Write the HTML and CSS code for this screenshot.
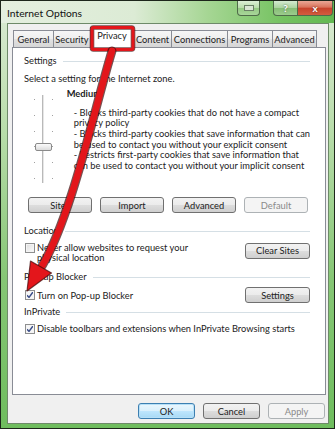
FILE: index.html
```html
<!DOCTYPE html>
<html>

<head>
    <meta charset="utf-8">
    <title>Internet Options</title>
    <link rel="stylesheet" href="styles.css">
</head>

<body>
    <div class="window">
        <div class="titlebar">
            <span class="title">Internet Options</span>
            <div class="caption">
                <span class="cap cap-tool"><i></i></span>
                <span class="cap cap-help">?</span>
                <span class="cap cap-close">x</span>
            </div>
        </div>
        <div class="client">
            <div class="tabs">
                <span class="tab">General</span>
                <span class="tab">Security</span>
                <span class="tab on">Privacy</span>
                <span class="tab">Content</span>
                <span class="tab">Connections</span>
                <span class="tab">Programs</span>
                <span class="tab">Advanced</span>
            </div>
            <div class="panel">
                <div class="group-head settings-head"><span>Settings</span></div>
                <p class="zone">Select a setting for the Internet zone.</p>
                <div class="level">
                    <div class="slider">
                        <div class="ticks">
                            <i></i><i></i><i></i><i></i><i></i><i></i>
                        </div>
                        <div class="track"><span class="thumb"></span></div>
                        <div class="ticks">
                            <i></i><i></i><i></i><i></i><i></i><i></i>
                        </div>
                    </div>
                    <div class="level-text">
                        <b>Medium</b>
                        <p>- Blocks third-party cookies that do not have a compact<br>
                            privacy policy<br>
                            - Blocks third-party cookies that save information that can<br>
                            be used to contact you without your explicit consent<br>
                            - Restricts first-party cookies that save information that<br>
                            can be used to contact you without your implicit consent</p>
                    </div>
                </div>
                <div class="btn-row">
                    <span class="btn">Sites</span>
                    <span class="btn">Import</span>
                    <span class="btn">Advanced</span>
                    <span class="btn disabled">Default</span>
                </div>

                <div class="group-head location-head"><span>Location</span></div>
                <div class="opt-row location-row">
                    <label class="check"><span class="box"></span><span>Never allow websites to request your<br>physical location</span></label>
                    <span class="btn btn-side">Clear Sites</span>
                </div>

                <div class="group-head popup-head"><span>Pop-up Blocker</span></div>
                <div class="opt-row popup-row">
                    <label class="check"><span class="box checked"></span><span>Turn on Pop-up Blocker</span></label>
                    <span class="btn btn-side">Settings</span>
                </div>

                <div class="group-head private-head"><span>InPrivate</span></div>
                <div class="opt-row private-row">
                    <label class="check"><span class="box checked"></span><span>Disable toolbars and extensions when InPrivate Browsing starts</span></label>
                </div>
            </div>
            <div class="dlg-buttons">
                <span class="btn default">OK</span>
                <span class="btn">Cancel</span>
                <span class="btn disabled">Apply</span>
            </div>
        </div>

        <svg class="callout" width="335" height="429" viewBox="0 0 335 429">
            <rect x="92" y="27.5" width="41" height="22" rx="1.5" fill="none" stroke="#3d0707" stroke-width="4.6" opacity="0.7"/>
            <rect x="92" y="27.5" width="41" height="22" rx="1.5" fill="none" stroke="#e3161b" stroke-width="3"/>
            <path d="M112,51 C94,110 72,215 42,266" fill="none" stroke="#3d0707" stroke-width="9" stroke-linecap="round" opacity="0.7"/>
            <path d="M112,51 C94,110 72,215 42,266" fill="none" stroke="#e3161b" stroke-width="6.6" stroke-linecap="round"/>
            <polygon points="27,291 30.5,261 51.5,273" fill="#e3161b" stroke="#3d0707" stroke-opacity="0.7" stroke-width="1.2" stroke-linejoin="round"/>
        </svg>
    </div>
</body>

</html>
```

FILE: styles.css
```css
* {
    margin: 0;
    padding: 0;
    box-sizing: border-box;
}

body {
    width: 335px;
    height: 429px;
    overflow: hidden;
    background: #000;
    font-family: Lato, "Liberation Sans", sans-serif;
    font-size: 9.3px;
    color: #222;
}

.window {
    position: relative;
    width: 335px;
    height: 429px;
    border: 1px solid #1d261b;
    background: linear-gradient(180deg, #dcebd5 0%, #b9ddab 30%, #86c675 65%, #6fbd5e 100%);
    display: flex;
    flex-direction: column;
}

/* title bar */
.titlebar {
    height: 22px;
    display: flex;
    align-items: flex-start;
    background: linear-gradient(90deg, #e4efdf 0%, #dcebd5 40%, #a6d694 62%, #74c260 85%, #62b851 100%);
}

.title {
    padding: 6px 0 0 6px;
    font-size: 10.3px;
    color: #111;
}

.caption {
    margin-left: auto;
    display: flex;
    margin-right: 1px;
}

.cap {
    height: 15px;
    border: 1px solid #4f6b49;
    border-top: none;
    border-radius: 0 0 4px 4px;
    display: flex;
    align-items: center;
    justify-content: center;
    color: #fff;
    font-weight: bold;
    font-size: 10px;
}

.cap-tool {
    width: 23px;
    margin-right: 13px;
    background: linear-gradient(180deg, #dcefd6 0%, #b7dca9 50%, #93c982 51%, #a9d69a 100%);
}

.cap-tool i {
    width: 10px;
    height: 6px;
    border: 1px solid #6b7f67;
    background: #d9e6d4;
}

.cap-help {
    width: 25px;
    border-radius: 0 0 0 4px;
    background: linear-gradient(180deg, #d4ead0 0%, #a9d29d 50%, #86bd75 51%, #9ccc8d 100%);
    text-shadow: 0 0 2px #3c5a36;
}

.cap-close {
    width: 35px;
    border-left: none;
    border-radius: 0 0 4px 0;
    background: linear-gradient(180deg, #e9a795 0%, #d9735b 45%, #c7432b 50%, #d35c3f 100%);
    text-shadow: 0 0 2px #5a1a10;
}

/* client area */
.client {
    flex: 1;
    margin: 0 5px 4px 6px;
    border: 1px solid #6e8a69;
    background: #f0f0f0;
    display: flex;
    flex-direction: column;
    padding: 3px 2px 0 4px;
}

.tabs {
    height: 20px;
    display: flex;
    align-items: flex-end;
    padding-left: 1px;
}

.tab {
    height: 17px;
    border: 1px solid #898c95;
    border-bottom: none;
    margin-right: -1px;
    background: linear-gradient(180deg, #f6f6f6 0%, #eeeeee 50%, #e2e2e2 51%, #d6d6d6 100%);
    display: flex;
    align-items: center;
    justify-content: center;
    white-space: nowrap;
}

.tab:nth-child(1) { width: 41px; }
.tab:nth-child(2) { width: 38px; }
.tab:nth-child(3) { width: 44px; }
.tab:nth-child(4) { width: 39px; }
.tab:nth-child(5) { width: 57px; }
.tab:nth-child(6) { width: 46px; }
.tab:nth-child(7) { width: 45px; }

.tab.on {
    height: 21px;
    margin-bottom: -1px;
    background: #fff;
    position: relative;
    z-index: 1;
    align-items: flex-start;
    padding-top: 2px;
}

.panel {
    height: 348px;
    border: 1px solid #898c95;
    background: #fff;
    padding: 0 15px 0 11px;
    display: flex;
    flex-direction: column;
}

.group-head {
    height: 12px;
    line-height: 12px;
    display: flex;
    align-items: center;
}

.group-head::after {
    content: "";
    flex: 1;
    height: 1px;
    margin-left: 6px;
    background: #d5dfe5;
}

.settings-head { margin-top: 7px; }
.location-head { margin-top: 12px; }
.popup-head { margin-top: 8px; }
.private-head { margin-top: 3px; }

.zone {
    margin-top: 6px;
    line-height: 12px;
}

/* privacy level */
.level {
    height: 98px;
    display: flex;
}

.slider {
    width: 28px;
    margin-left: 8px;
    padding-top: 10px;
    display: flex;
    justify-content: space-between;
}

.ticks {
    width: 4px;
    padding: 4px 0 4px;
    display: flex;
    flex-direction: column;
    justify-content: space-between;
    align-items: center;
}

.ticks i {
    width: 1px;
    height: 1px;
    background: #a0a0a0;
}

.track {
    position: relative;
    width: 3px;
    border-left: 1px solid #b9b9b9;
    border-right: 1px solid #fff;
    background: #e6e6e6;
}

.thumb {
    position: absolute;
    left: -8px;
    top: 48px;
    width: 17px;
    height: 8px;
    border: 1px solid #8a8a8a;
    border-radius: 2px;
    background: linear-gradient(180deg, #fbfbfb, #dcdcdc);
}

.level-text {
    margin-left: 12px;
    padding-top: 3px;
    white-space: nowrap;
}

.level-text b {
    display: block;
    line-height: 11px;
    font-weight: bold;
}

.level-text p {
    margin: 8.5px 0 0 7px;
    line-height: 10.7px;
}

/* buttons */
.btn {
    height: 16px;
    border: 1px solid #707070;
    border-radius: 3px;
    background: linear-gradient(180deg, #f2f2f2 0%, #ebebeb 50%, #dddddd 51%, #cfcfcf 100%);
    display: flex;
    align-items: center;
    justify-content: center;
    white-space: nowrap;
}

.btn.disabled {
    border-color: #adb2b5;
    background: #f4f4f4;
    color: #8a8a8a;
}

.btn.default {
    border-color: #3c7fb1;
    background: linear-gradient(180deg, #eaf6fd 0%, #d9f0fc 50%, #bee6fd 51%, #a7d9f5 100%);
    box-shadow: inset 0 0 0 1px #b7e0f7;
}

.btn-row {
    margin-top: 14px;
    padding-left: 4px;
    display: flex;
    gap: 8px;
}

.btn-row .btn {
    width: 64px;
}

.btn-side {
    width: 65px;
    margin-left: auto;
}

/* options */
.opt-row {
    display: flex;
}

.location-row {
    margin-top: 6px;
    align-items: flex-start;
    line-height: 10px;
}

.popup-row {
    margin-top: 4px;
    align-items: center;
}

.private-row {
    margin-top: 5px;
    line-height: 12px;
}

.check {
    display: flex;
    align-items: flex-start;
    white-space: nowrap;
}

.popup-row .check,
.private-row .check {
    align-items: center;
}

.box {
    width: 10px;
    height: 10px;
    margin: 0 2px 0 1px;
    border: 1px solid #8e8f8f;
    background: linear-gradient(135deg, #dcdcdc, #fdfdfd);
    box-shadow: inset 0 0 0 1px #f4f4f4;
    flex: none;
}

.box.checked {
    background: #f6f6f6 no-repeat center / 8px 8px;
    background-image: url("data:image/svg+xml;utf8,<svg xmlns='http://www.w3.org/2000/svg' viewBox='0 0 8 8'><path d='M1 4.2 L3 6.4 L7 1' fill='none' stroke='%233c4f8a' stroke-width='1.5'/></svg>");
}

.dlg-buttons {
    margin-top: 8px;
    padding-right: 1px;
    display: flex;
    justify-content: flex-end;
    gap: 8px;
}

.dlg-buttons .btn {
    width: 57px;
}

.callout {
    position: absolute;
    left: -1px;
    top: -1px;
    z-index: 5;
    pointer-events: none;
}
```
